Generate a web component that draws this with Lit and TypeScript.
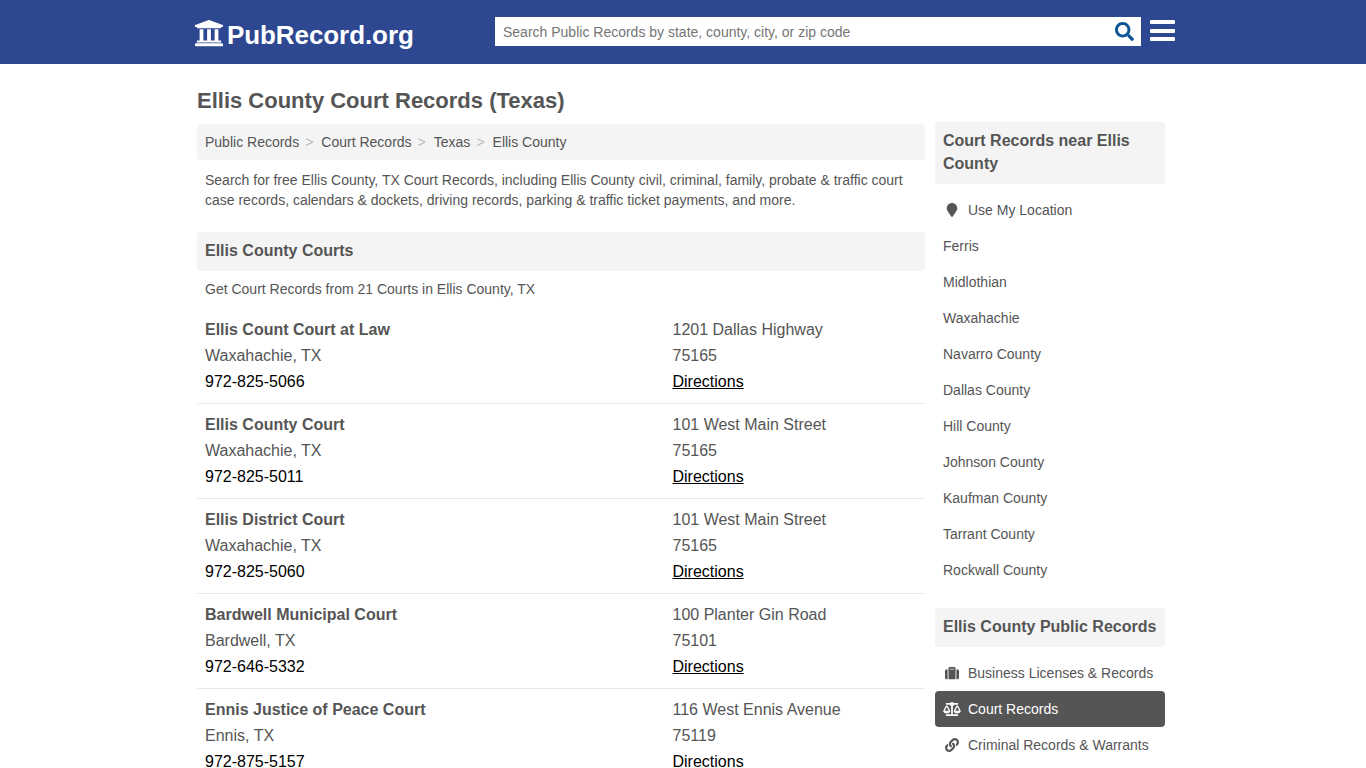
import { html, css, LitElement, svg } from 'lit';
import { customElement } from 'lit/decorators.js';

const courts = [
    ['Ellis Count Court at Law', 'Waxahachie, TX', '972-825-5066', '1201 Dallas Highway', '75165'],
    ['Ellis County Court', 'Waxahachie, TX', '972-825-5011', '101 West Main Street', '75165'],
    ['Ellis District Court', 'Waxahachie, TX', '972-825-5060', '101 West Main Street', '75165'],
    ['Bardwell Municipal Court', 'Bardwell, TX', '972-646-5332', '100 Planter Gin Road', '75101'],
    ['Ennis Justice of Peace Court', 'Ennis, TX', '972-875-5157', '116 West Ennis Avenue', '75119'],
];

const nearby = [
    'Ferris',
    'Midlothian',
    'Waxahachie',
    'Navarro County',
    'Dallas County',
    'Hill County',
    'Johnson County',
    'Kaufman County',
    'Tarrant County',
    'Rockwall County',
];

const crumbs = ['Public Records', 'Court Records', 'Texas', 'Ellis County'];

const pinIcon = svg`<path d="M172.268 501.670C26.970 291.031 0 269.413 0 192 0 85.961 85.961 0 192 0s192 85.961 192 192c0 77.413-26.970 99.031-172.268 309.670-9.535 13.774-29.930 13.773-39.464 0z"/>`;
const caseIcon = svg`<path d="M128 480h256V80c0-26.500-21.500-48-48-48H176c-26.500 0-48 21.500-48 48v400zm64-384h128v32H192V96zm320 80v256c0 26.500-21.500 48-48 48h-48V128h48c26.500 0 48 21.500 48 48zM96 480H48c-26.500 0-48-21.500-48-48V176c0-26.500 21.500-48 48-48h48v352z"/>`;
const scaleIcon = svg`<path d="M256 336h-.02c0-16.180 1.340-8.730-85.050-181.510-17.650-35.290-68.190-35.360-85.870 0C-2.060 328.750.02 320.330.02 336H0c0 44.180 57.310 80 128 80s128-35.820 128-80zM128 176l72 144H56l72-144zm511.980 160c0-16.180 1.340-8.730-85.050-181.510-17.650-35.290-68.190-35.360-85.870 0-87.120 174.260-85.040 165.840-85.040 181.510H384c0 44.180 57.310 80 128 80s128-35.820 128-80h-.02zM440 320l72-144 72 144H440zm88 128H352V153.250c23.510-10.290 41.160-31.480 46.390-57.250H528c8.840 0 16-7.160 16-16V48c0-8.840-7.160-16-16-16H383.640C369.040 12.680 346.090 0 320 0s-49.040 12.680-63.640 32H112c-8.840 0-16 7.160-16 16v32c0 8.840 7.160 16 16 16h129.610c5.230 25.760 22.870 46.960 46.390 57.250V448H112c-8.840 0-16 7.160-16 16v32c0 8.840 7.160 16 16 16h416c8.840 0 16-7.160 16-16v-32c0-8.840-7.160-16-16-16z"/>`;
const linkIcon = svg`<path d="M326.612 185.391c59.747 59.809 58.927 155.698.36 214.590-.11.120-.24.250-.36.370l-67.200 67.200c-59.270 59.270-155.699 59.262-214.960 0-59.270-59.260-59.270-155.700 0-214.960l37.106-37.106c9.840-9.840 26.786-3.300 27.294 10.606.648 17.722 3.826 35.527 9.690 52.721 1.986 5.822.567 12.262-3.783 16.612l-13.087 13.087c-28.026 28.026-28.905 73.660-1.155 101.960 28.024 28.579 74.086 28.749 102.325.510l67.200-67.190c28.191-28.191 28.073-73.757 0-101.830-3.701-3.694-7.429-6.564-10.341-8.569a16.037 16.037 0 0 1-6.947-12.606c-.396-10.567 3.348-21.456 11.698-29.806l21.054-21.055c5.521-5.521 14.182-6.199 20.584-1.731a152.482 152.482 0 0 1 20.522 17.197zM467.547 44.449c-59.261-59.262-155.690-59.270-214.960 0l-67.200 67.200c-.12.120-.25.250-.36.370-58.566 58.892-59.387 154.781.36 214.590a152.454 152.454 0 0 0 20.521 17.196c6.402 4.468 15.064 3.789 20.584-1.731l21.054-21.055c8.350-8.350 12.094-19.239 11.698-29.806a16.037 16.037 0 0 0-6.947-12.606c-2.912-2.005-6.640-4.875-10.341-8.569-28.073-28.073-28.191-73.639 0-101.830l67.200-67.190c28.239-28.239 74.300-28.069 102.325.510 27.750 28.300 26.872 73.934-1.155 101.960l-13.087 13.087c-4.350 4.350-5.769 10.790-3.783 16.612 5.864 17.194 9.042 34.999 9.690 52.721.509 13.906 17.454 20.446 27.294 10.606l37.106-37.106c59.271-59.259 59.271-155.699.001-214.959z"/>`;

@customElement('app-root')
export class AppRoot extends LitElement {
    static styles = css`
        :host {
            display: block;
            height: 768px;
            overflow: hidden;
            background: #fff;
            color: #555;
            font-family: 'Liberation Sans', Arial, sans-serif;
            font-size: 14px;
        }
        a {
            color: inherit;
            text-decoration: none;
        }
        .topbar {
            height: 64px;
            background: #2d4891;
            padding-left: 194px;
            display: flex;
            align-items: center;
        }
        .logo {
            display: flex;
            align-items: center;
            width: 301px;
            color: #fff;
            font-size: 26px;
            letter-spacing: -0.08px;
            font-weight: bold;
            padding-top: 6px;
            box-sizing: border-box;
        }
        .logo svg {
            width: 30px;
            height: 30px;
            margin: -4px 3px 0 0;
            fill: #fff;
            flex: none;
        }
        .search {
            width: 646px;
            height: 29px;
            background: #fff;
            display: flex;
            align-items: center;
            justify-content: space-between;
            box-sizing: border-box;
            padding: 0 7px 0 8px;
            margin-top: -1px;
            color: #757575;
        }
        .search svg {
            width: 19px;
            height: 19px;
            fill: #0f5595;
        }
        .burger {
            display: flex;
            flex-direction: column;
            gap: 4.500px;
            margin: -3px 0 0 9px;
            width: 25px;
        }
        .burger span {
            height: 4px;
            background: #fff;
            border-radius: 1px;
        }
        .page {
            padding-left: 197px;
        }
        h1 {
            margin: 0;
            padding-top: 23px;
            font-size: 22px;
            line-height: 28px;
            height: 37px;
            color: #555;
        }
        .columns {
            display: flex;
            gap: 10px;
        }
        .main {
            width: 728px;
        }
        .side {
            width: 230px;
            margin-top: -2px;
        }
        .crumbs {
            height: 36px;
            box-sizing: border-box;
            background: #f4f4f4;
            border-radius: 4px;
            display: flex;
            align-items: center;
            padding: 0 8px;
        }
        .sep {
            color: #bbb;
            margin: 0 8px 0 6px;
        }
        .intro {
            margin: 0;
            padding: 10px 8px 0;
            line-height: 20px;
            height: 62px;
        }
        .section {
            height: 39px;
            background: #f4f4f4;
            border-radius: 4px;
            box-sizing: border-box;
            padding: 9px 8px 0;
            line-height: 20px;
            font-size: 16px;
            font-weight: bold;
        }
        .count {
            padding: 8px 8px 0;
            height: 38px;
            line-height: 20px;
            box-sizing: border-box;
            margin: 0;
        }
        .court {
            display: grid;
            grid-template-columns: 467.500px 1fr;
            padding: 8px 8px 6px;
            height: 95px;
            box-sizing: border-box;
            border-bottom: 1px solid #e8e8e8;
            font-size: 16px;
            line-height: 26px;
        }
        .court div {
            display: flex;
            flex-direction: column;
        }
        .phone {
            color: #000;
        }
        .directions {
            color: #000;
            text-decoration: underline;
        }
        .side h2 {
            margin: 0;
            padding: 7px 8px 9px;
            background: #f4f4f4;
            border-radius: 4px;
            font-size: 16px;
            line-height: 23px;
            color: #555;
        }
        .side ul {
            list-style: none;
            margin: 8px 0 20px;
            padding: 0;
        }
        .side li {
            height: 36px;
            display: flex;
            align-items: center;
            padding: 0 8px;
            border-radius: 4px;
        }
        .side li svg {
            width: 18px;
            height: 14px;
            margin-right: 7px;
            fill: #555;
            flex: none;
        }
        .side li.active {
            background: #555;
            color: #fff;
        }
        .side li.active svg {
            fill: #fff;
        }
    `;

    renderCourt(c: string[]) {
        return html`
            <section class="court">
                <div>
                    <strong>${c[0]}</strong>
                    <span>${c[1]}</span>
                    <a class="phone" href="#">${c[2]}</a>
                </div>
                <div>
                    <span>${c[3]}</span>
                    <span>${c[4]}</span>
                    <span><a class="directions" href="#">Directions</a></span>
                </div>
            </section>
        `;
    }

    render() {
        return html`
            <header class="topbar">
                <a class="logo" href="#">
                    <svg viewBox="0 0 512 512">
                        <path d="M496 128v16a8 8 0 0 1-8 8h-24v12c0 6.627-5.373 12-12 12H60c-6.627 0-12-5.373-12-12v-12H24a8 8 0 0 1-8-8v-16a8 8 0 0 1 4.941-7.392l232-88a7.996 7.996 0 0 1 6.118 0l232 88A8 8 0 0 1 496 128zm-24 304H40c-13.255 0-24 10.745-24 24v16a8 8 0 0 0 8 8h464a8 8 0 0 0 8-8v-16c0-13.255-10.745-24-24-24zM96 192v192H60c-6.627 0-12 5.373-12 12v20h416v-20c0-6.627-5.373-12-12-12h-36V192h-64v192h-64V192h-64v192h-64V192H96z"/>
                    </svg>
                    PubRecord.org
                </a>
                <div class="search">
                    <span>Search Public Records by state, county, city, or zip code</span>
                    <svg viewBox="0 0 512 512">
                        <path d="M505 442.700L405.300 343c-4.500-4.500-10.600-7-17-7H372c27.600-35.300 44-79.700 44-128C416 93.100 322.900 0 208 0S0 93.100 0 208s93.100 208 208 208c48.300 0 92.700-16.400 128-44v16.300c0 6.400 2.500 12.500 7 17l99.700 99.700c9.400 9.400 24.600 9.400 33.900 0l28.300-28.300c9.400-9.400 9.400-24.600.1-34zM208 336c-70.700 0-128-57.200-128-128 0-70.700 57.200-128 128-128 70.700 0 128 57.200 128 128 0 70.700-57.200 128-128 128z"/>
                    </svg>
                </div>
                <div class="burger"><span></span><span></span><span></span></div>
            </header>
            <div class="page">
                <h1>Ellis County Court Records (Texas)</h1>
                <div class="columns">
                    <main class="main">
                        <nav class="crumbs">
                            ${crumbs.map(
                                (c, i) => html`<a href="#">${c}</a>${i < crumbs.length - 1
                                        ? html`<span class="sep">&gt;</span>`
                                        : ''}`
                            )}
                        </nav>
                        <p class="intro">
                            Search for free Ellis County, TX Court Records, including Ellis County civil, criminal, family, probate &amp; traffic court case records, calendars &amp; dockets, driving records, parking &amp; traffic ticket payments, and more.
                        </p>
                        <div class="section">Ellis County Courts</div>
                        <p class="count">Get Court Records from 21 Courts in Ellis County, TX</p>
                        ${courts.map(c => this.renderCourt(c))}
                    </main>
                    <aside class="side">
                        <h2>Court Records near Ellis County</h2>
                        <ul>
                            <li><svg viewBox="0 0 384 512">${pinIcon}</svg>Use My Location</li>
                            ${nearby.map(n => html`<li><a href="#">${n}</a></li>`)}
                        </ul>
                        <h2>Ellis County Public Records</h2>
                        <ul>
                            <li><svg viewBox="0 0 512 512">${caseIcon}</svg>Business Licenses &amp; Records</li>
                            <li class="active"><svg viewBox="0 0 640 512">${scaleIcon}</svg>Court Records</li>
                            <li><svg viewBox="0 0 512 512">${linkIcon}</svg>Criminal Records &amp; Warrants</li>
                        </ul>
                    </aside>
                </div>
            </div>
        `;
    }
}
